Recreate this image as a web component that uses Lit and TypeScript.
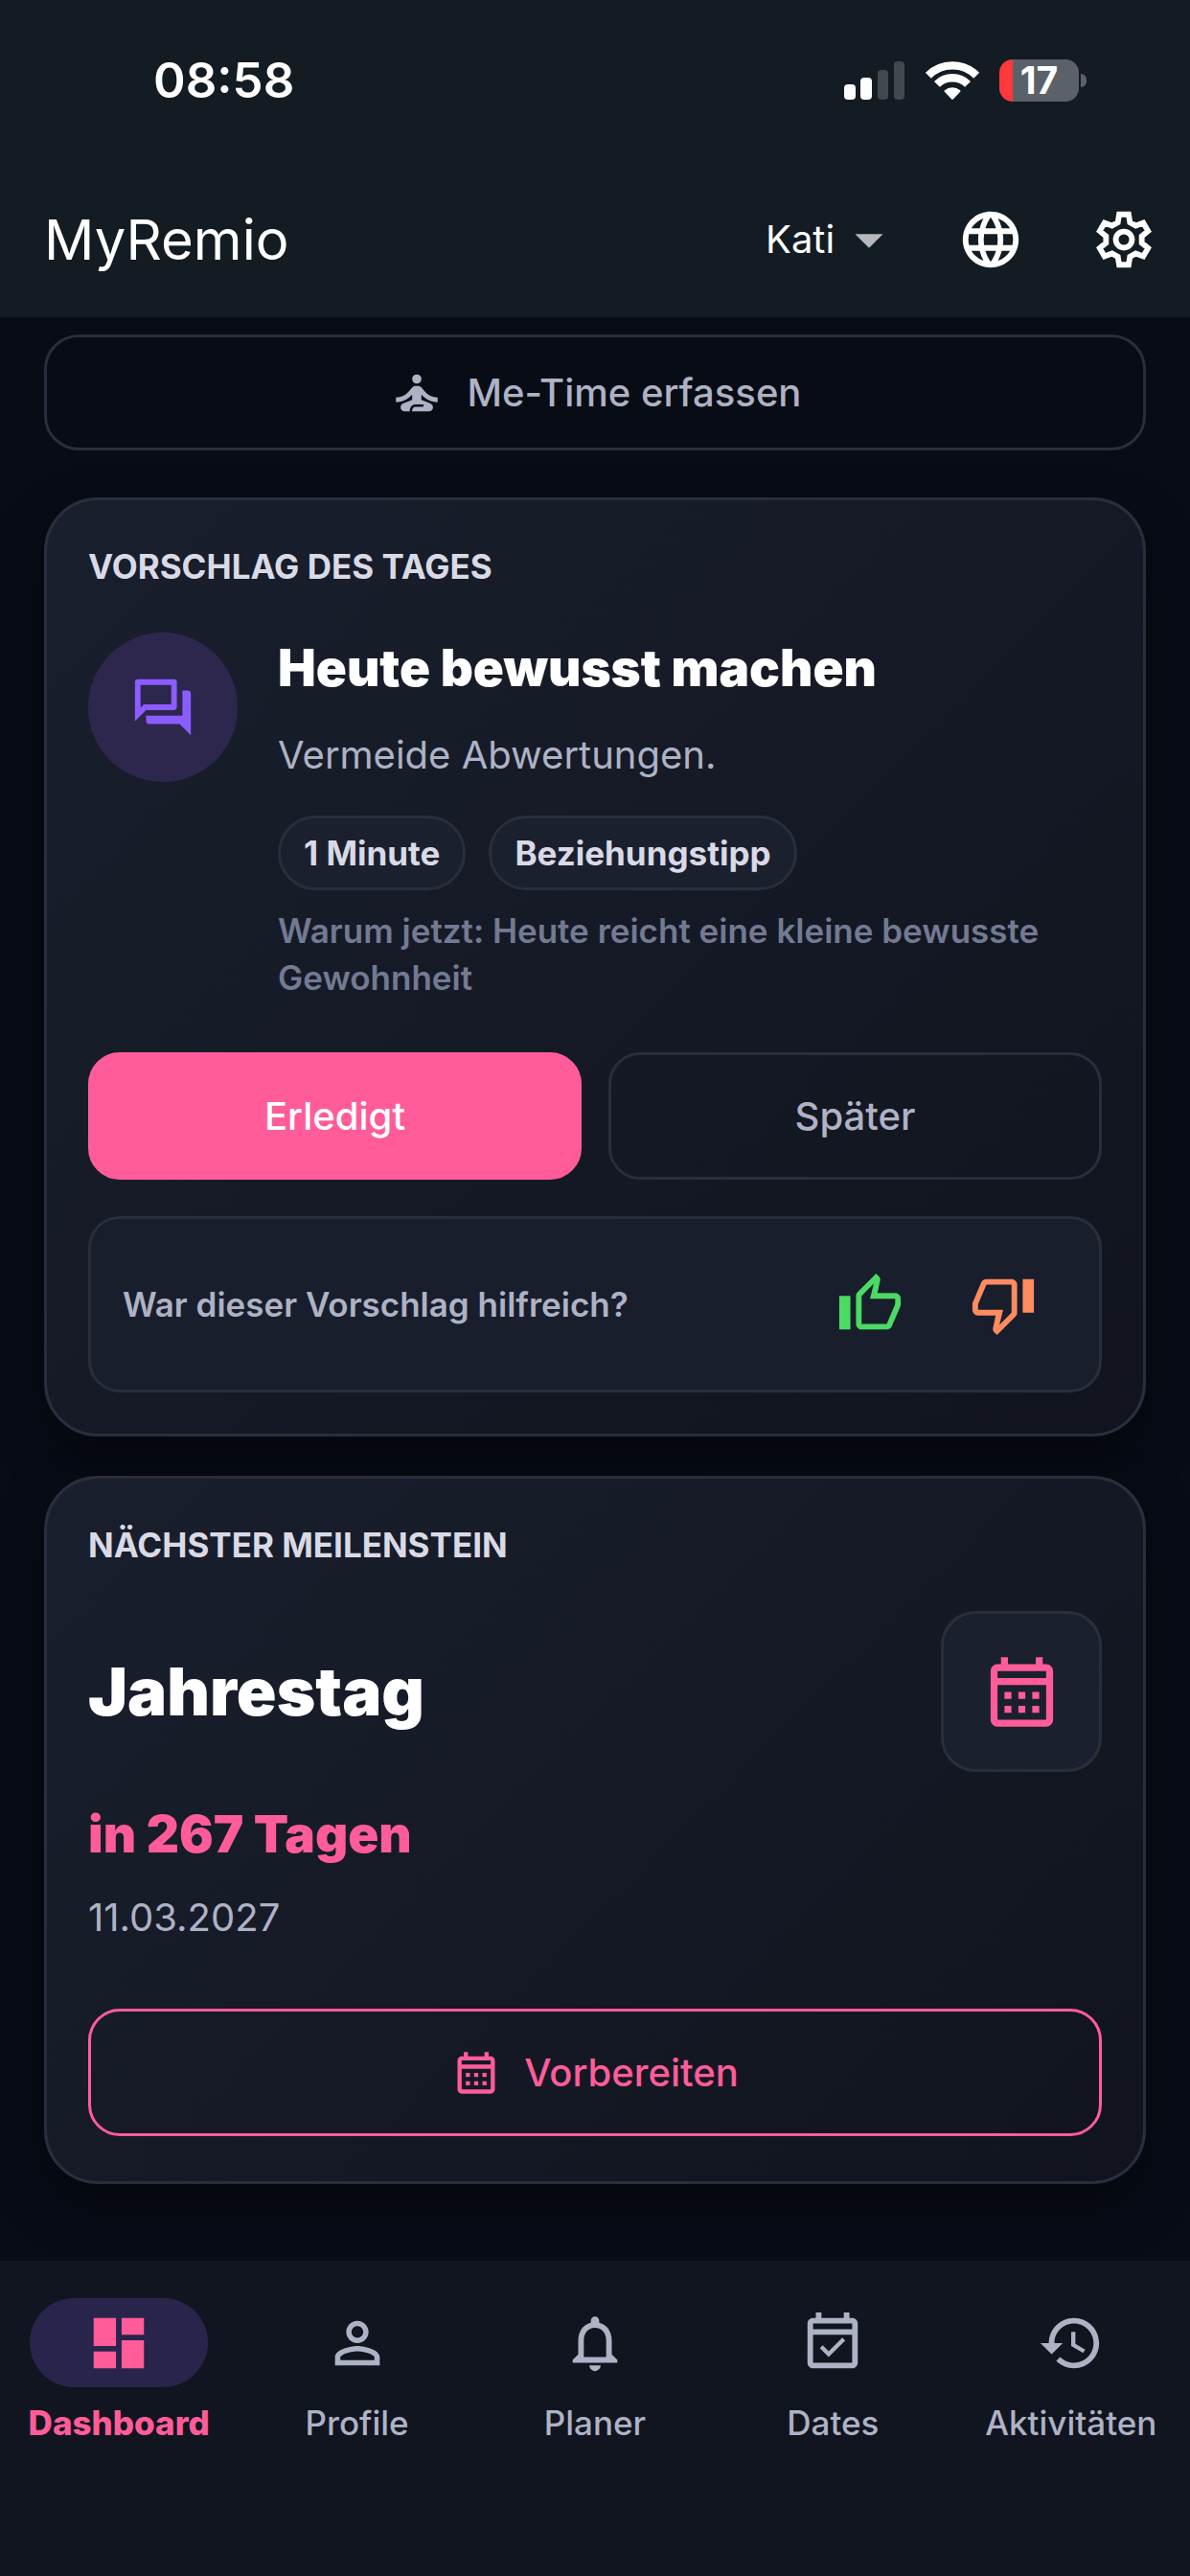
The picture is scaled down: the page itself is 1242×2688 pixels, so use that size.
import { LitElement, html, css, svg } from "lit";
import { customElement, property, state } from "lit/decorators.js";
import { classMap } from "lit/directives/class-map.js";

const ICONS: Record<string, string> = {
  meditate:
    "M10 6a2 2 0 1 0 4 0 2 2 0 1 0-4 0zM21 16v-2c-2.24 0-4.16-.96-5.6-2.68l-1.34-1.6C13.68 9.26 13.12 9 12.53 9h-1.05c-.6 0-1.15.26-1.53.72l-1.34 1.6C7.16 13.04 5.24 14 3 14v2c2.77 0 5.19-1.17 7-3.25V15l-3.88 1.55c-.67.27-1.12.93-1.12 1.66C5 19.2 5.8 20 6.79 20H9v-.5c0-1.38 1.12-2.5 2.5-2.5h3c.28 0 .5.22.5.5s-.22.5-.5.5h-3c-.83 0-1.5.67-1.5 1.5v.5h7.21c.99 0 1.79-.8 1.79-1.79 0-.73-.45-1.39-1.12-1.66L14 15v-2.25c1.81 2.08 4.23 3.25 7 3.25z",
  forum:
    "M15 4v7H5.17L4 12.17V4h11m1-2H3c-.55 0-1 .45-1 1v14l4-4h10c.55 0 1-.45 1-1V3c0-.55-.45-1-1-1zm5 4h-2v9H6v2c0 .55.45 1 1 1h11l4 4V7c0-.55-.45-1-1-1z",
  thumbUp:
    "M9 21h9c.83 0 1.54-.5 1.84-1.22l3.02-7.05c.09-.23.14-.47.14-.73v-2c0-1.1-.9-2-2-2h-6.31l.95-4.57.03-.32c0-.41-.17-.79-.44-1.06L14.17 1 7.58 7.59C7.22 7.95 7 8.45 7 9v10c0 1.1.9 2 2 2zM9 9l4.34-4.34L12 10h9v2l-3 7H9V9zM1 9h4v12H1z",
  thumbDown:
    "M15 3H6c-.83 0-1.54.5-1.84 1.22l-3.02 7.05c-.09.23-.14.47-.14.73v2c0 1.1.9 2 2 2h6.31l-.95 4.57-.03.32c0 .41.17.79.44 1.06L9.83 23l6.59-6.59c.36-.36.58-.86.58-1.41V5c0-1.1-.9-2-2-2zm0 12l-4.34 4.34L12 14H3v-2l3-7h9v10zm4-12h4v12h-4z",
  calendar:
    "M19 4h-1V2h-2v2H8V2H6v2H5c-1.11 0-1.99.9-1.99 2L3 20c0 1.1.89 2 2 2h14c1.1 0 2-.9 2-2V6c0-1.1-.9-2-2-2zm0 16H5V10h14v10zm0-12H5V6h14v2zM9 14H7v-2h2v2zm4 0h-2v-2h2v2zm4 0h-2v-2h2v2zm-8 4H7v-2h2v2zm4 0h-2v-2h2v2zm4 0h-2v-2h2v2z",
  dashboard: "M3 13h8V3H3v10zm0 8h8v-6H3v6zm10 0h8V11h-8v10zm0-18v6h8V3h-8z",
  person:
    "M12 5.9c1.16 0 2.1.94 2.1 2.1s-.94 2.1-2.1 2.1S9.9 9.16 9.9 8s.94-2.1 2.1-2.1m0 9c2.97 0 6.1 1.46 6.1 2.1v1.1H5.9V17c0-.64 3.13-2.1 6.1-2.1M12 4C9.79 4 8 5.79 8 8s1.79 4 4 4 4-1.79 4-4-1.79-4-4-4zm0 9c-2.67 0-8 1.34-8 4v3h16v-3c0-2.66-5.33-4-8-4z",
  bell:
    "M12 22c1.1 0 2-.9 2-2h-4c0 1.1.9 2 2 2zm6-6v-5c0-3.07-1.63-5.64-4.5-6.32V4c0-.83-.67-1.5-1.5-1.5s-1.5.67-1.5 1.5v.68C7.64 5.36 6 7.92 6 11v5l-2 2v1h16v-1l-2-2zm-2 1H8v-6c0-2.48 1.51-4.5 4-4.5s4 2.02 4 4.5v6z",
  eventCheck:
    "M16.53 11.06L15.47 10l-4.88 4.88-2.12-2.12-1.06 1.06L10.59 17l5.94-5.94zM19 3h-1V1h-2v2H8V1H6v2H5c-1.11 0-1.99.9-1.99 2L3 19c0 1.1.89 2 2 2h14c1.1 0 2-.9 2-2V5c0-1.1-.9-2-2-2zm0 16H5V9h14v10zM5 7V5h14v2H5z",
  history:
    "M13 3c-4.97 0-9 4.03-9 9H1l3.89 3.89.07.14L9 12H6c0-3.87 3.13-7 7-7s7 3.13 7 7-3.13 7-7 7c-1.93 0-3.68-.79-4.94-2.06l-1.42 1.42C8.27 19.99 10.51 21 13 21c4.97 0 9-4.03 9-9s-4.03-9-9-9zm-1 5v5l4.28 2.54.72-1.21-3.5-2.08V8H12z",
  globe:
    "M11.99 2C6.47 2 2 6.48 2 12s4.47 10 9.99 10C17.52 22 22 17.52 22 12S17.52 2 11.99 2zm6.93 6h-2.95c-.32-1.25-.78-2.45-1.38-3.56 1.84.63 3.37 1.91 4.33 3.56zM12 4.04c.83 1.2 1.48 2.53 1.91 3.96h-3.82c.43-1.43 1.08-2.76 1.91-3.96zM4.26 14C4.1 13.36 4 12.69 4 12s.1-1.36.26-2h3.38c-.08.66-.14 1.32-.14 2s.06 1.34.14 2H4.26zm.82 2h2.95c.32 1.25.78 2.45 1.38 3.56-1.84-.63-3.37-1.9-4.33-3.56zm2.95-8H5.08c.96-1.66 2.49-2.93 4.33-3.56C8.81 5.55 8.35 6.75 8.03 8zM12 19.96c-.83-1.2-1.48-2.53-1.91-3.96h3.82c-.43 1.43-1.08 2.76-1.91 3.96zM14.34 14H9.66c-.09-.66-.16-1.32-.16-2s.07-1.35.16-2h4.68c.09.65.16 1.32.16 2s-.07 1.34-.16 2zm.25 5.56c.6-1.11 1.06-2.31 1.38-3.56h2.95c-.96 1.65-2.49 2.93-4.33 3.56zM16.36 14c.08-.66.14-1.32.14-2s-.06-1.34-.14-2h3.38c.16.64.26 1.31.26 2s-.1 1.36-.26 2h-3.38z",
  dropDown: "M7 10l5 5 5-5z",
};

/* Outline of a six-toothed gear: one tooth, repeated every 60 degrees. */
const GEAR_POINTS = [0, 1, 2, 3, 4, 5]
  .flatMap((k) => {
    const a = (k * Math.PI) / 3;
    return [
      [-2.16, -6.14],
      [-1.7, -9],
      [1.7, -9],
      [2.16, -6.14],
    ].map(([x, y]) =>
      [12 + x * Math.cos(a) - y * Math.sin(a), 12 + x * Math.sin(a) + y * Math.cos(a)]
        .map((n) => n.toFixed(2))
        .join(",")
    );
  })
  .join(" ");

@customElement("app-icon")
class AppIcon extends LitElement {
  static styles = css`
    :host {
      display: inline-flex;
      flex: none;
      width: 70px;
      height: 70px;
    }
    .glyph {
      width: 100%;
      height: 100%;
      display: block;
      fill: currentColor;
    }
  `;

  @property() name = "";

  render() {
    return html`<svg class="glyph" viewBox="0 0 24 24" aria-hidden="true">
      ${this.name === "gear"
        ? svg`<g fill="none" stroke="currentColor" stroke-width="2">
            <polygon points=${GEAR_POINTS}></polygon>
            <circle cx="12" cy="12" r="2.9"></circle>
          </g>`
        : svg`<path d=${ICONS[this.name] ?? ""}></path>`}
    </svg>`;
  }
}

@customElement("status-bar")
class StatusBar extends LitElement {
  static styles = css`
    :host {
      display: flex;
      justify-content: space-between;
      align-items: center;
      padding: 53px 108px 53px 160px;
      color: #fff;
    }
    .time {
      font-size: 51px;
      line-height: 62px;
      font-weight: 600;
    }
    .indicators {
      display: flex;
      align-items: center;
      gap: 21px;
    }
    .signal {
      width: 64px;
      height: 42px;
    }
    .wifi {
      width: 56px;
      height: 42px;
    }
    .battery {
      display: flex;
      align-items: center;
      gap: 2px;
    }
    .cell {
      display: grid;
      place-items: center;
      width: 83px;
      height: 44px;
      box-sizing: border-box;
      border-radius: 14px;
      background: linear-gradient(90deg, #ff383c 14px, #5b6168 14px);
      font-size: 39px;
      line-height: 44px;
      font-weight: 700;
    }
    .nub {
      width: 6px;
      height: 14px;
      border-radius: 0 7px 7px 0;
      background: #5b6168;
    }
  `;

  render() {
    return html`
      <span class="time">08:58</span>
      <div class="indicators">
        <svg class="signal" viewBox="0 0 64 42" aria-hidden="true">
          <rect x="0" y="25" width="12" height="16" rx="4" fill="#fff"></rect>
          <rect x="17" y="18" width="12" height="23" rx="4" fill="#fff"></rect>
          <rect x="35" y="10" width="11" height="31" rx="4" fill="#41494f"></rect>
          <rect x="52" y="1" width="11" height="40" rx="4" fill="#41494f"></rect>
        </svg>
        <svg class="wifi" viewBox="0 0 56 42" aria-hidden="true">
          <g fill="none" stroke="#fff" stroke-width="8.4">
            <path d="M2.8 15.8A35.6 35.6 0 0 1 53.2 15.8"></path>
            <path d="M11.9 24.9A22.8 22.8 0 0 1 44.1 24.9"></path>
          </g>
          <path
            d="M19.6 32.6Q19 31.8 19.9 31.2A13 13 0 0 1 36.1 31.2Q37 31.8 36.4 32.6L28.8 40.4Q28 41.2 27.2 40.4Z"
            fill="#fff"
          ></path>
        </svg>
        <div class="battery">
          <span class="cell">17</span>
          <span class="nub"></span>
        </div>
      </div>
    `;
  }
}

interface NavItem {
  icon: string;
  label: string;
}

const NAV_ITEMS: NavItem[] = [
  { icon: "dashboard", label: "Dashboard" },
  { icon: "person", label: "Profile" },
  { icon: "bell", label: "Planer" },
  { icon: "eventCheck", label: "Dates" },
  { icon: "history", label: "Aktivitäten" },
];

@customElement("bottom-nav")
class BottomNav extends LitElement {
  static styles = css`
    :host {
      display: block;
      background: #11151f;
    }
    .bar {
      display: grid;
      grid-template-columns: repeat(5, minmax(0, 1fr));
      padding: 39px 0 139px;
    }
    .item {
      display: flex;
      flex-direction: column;
      align-items: center;
      gap: 16px;
      color: #aeb2c5;
      text-decoration: none;
      font-size: 35px;
      line-height: 42px;
      font-weight: 500;
      white-space: nowrap;
    }
    .pill {
      display: grid;
      place-items: center;
      width: 186px;
      height: 93px;
      border-radius: 47px;
    }
    .item.active {
      color: #ff5c99;
      font-weight: 800;
    }
    .item.active .pill {
      background: #29244b;
    }
  `;

  @state() private active = "Dashboard";

  render() {
    return html`<nav class="bar">
      ${NAV_ITEMS.map(
        (item) => html`<a
          class=${classMap({ item: true, active: item.label === this.active })}
          href="#${item.label.toLowerCase()}"
          @click=${() => (this.active = item.label)}
        >
          <span class="pill"><app-icon name=${item.icon}></app-icon></span>
          <span>${item.label}</span>
        </a>`
      )}
    </nav>`;
  }
}

@customElement("app-root")
class AppRoot extends LitElement {
  static styles = css`
    :host {
      display: flex;
      flex-direction: column;
      min-height: 100vh;
      background: #080c15;
      color: #fff;
      font-family: Inter, "Liberation Sans", sans-serif;
      font-optical-sizing: none;
    }
    .header {
      background: #131c23;
    }
    .appbar {
      display: flex;
      align-items: center;
      height: 163px;
      padding-left: 46px;
    }
    .brand {
      flex: 1;
      margin: 0;
      font-size: 58px;
      line-height: 74px;
      font-weight: 400;
    }
    .profile {
      position: relative;
      display: flex;
      align-items: center;
      margin-right: 22px;
    }
    .profile-select {
      appearance: none;
      border: 0;
      margin: 0;
      padding: 0 70px 0 0;
      background: transparent;
      color: #fff;
      font: inherit;
      font-size: 40px;
      line-height: 56px;
    }
    .profile-arrow {
      position: absolute;
      right: 0;
      color: #b6b9bc;
      pointer-events: none;
    }
    .icon-button {
      display: grid;
      place-items: center;
      width: 139px;
      height: 139px;
      padding: 0;
      border: 0;
      background: transparent;
      color: #fff;
    }
    .content {
      flex: 1;
      display: flex;
      flex-direction: column;
      padding: 18px 46px 80px;
    }
    .button {
      display: flex;
      align-items: center;
      justify-content: center;
      gap: 24px;
      height: 133px;
      padding: 0;
      box-sizing: border-box;
      border: 3px solid #2a2d3c;
      border-radius: 33px;
      background: transparent;
      color: #aeb2c5;
      font: inherit;
      font-size: 40px;
      line-height: 56px;
      font-weight: 500;
    }
    .button.primary {
      border-color: #ff5c99;
      background: #ff5c99;
      color: #fff;
    }
    .button.accent {
      margin-top: 67px;
      border-color: #ff5c99;
      color: #ff5c99;
    }
    .button.accent app-icon {
      width: 52px;
      height: 52px;
    }
    .button.metime {
      height: 121px;
      margin-bottom: 49px;
      border-radius: 36px;
    }
    .button.metime app-icon {
      width: 58px;
      height: 58px;
    }
    .cards {
      display: flex;
      flex-direction: column;
      gap: 41px;
    }
    .card {
      display: flex;
      flex-direction: column;
      padding: 48px 43px 43px;
      border: 3px solid #2a2e3c;
      border-radius: 56px;
      background: linear-gradient(135deg, #191f2d, #11141e) padding-box, #2a2e3c border-box;
      box-shadow: 0 24px 56px rgba(0, 0, 0, 0.4);
    }
    .card-title {
      margin: 0 0 48px;
      color: #d9dae6;
      font-size: 35px;
      line-height: 42px;
      font-weight: 700;
    }
    .tip {
      display: flex;
      align-items: flex-start;
      gap: 42px;
    }
    .tip-icon {
      display: grid;
      place-items: center;
      flex: none;
      width: 156px;
      height: 156px;
      border-radius: 50%;
      background: #2d274e;
      color: #8b5cff;
    }
    .tip-body {
      flex: 1;
      min-width: 0;
    }
    .headline {
      margin: 0;
      font-size: 53px;
      line-height: 74px;
      font-weight: 900;
    }
    .text {
      margin: 0;
      color: #aeb2c5;
      font-size: 40px;
      line-height: 56px;
      font-weight: 400;
    }
    .tip-body .text {
      margin: 26px 0 35px;
    }
    .chips {
      display: flex;
      flex-wrap: wrap;
      gap: 24px;
    }
    .chip {
      padding: 15px 24px;
      border: 3px solid #2a2e3c;
      border-radius: 39px;
      background: #1b202e;
      color: #d9dae6;
      font-size: 35px;
      line-height: 42px;
      font-weight: 700;
    }
    .reason {
      margin: 18px 0 0;
      color: #737a92;
      font-size: 35px;
      line-height: 49px;
      font-weight: 600;
    }
    .actions {
      display: grid;
      grid-template-columns: 1fr 1fr;
      gap: 28px;
      margin: 53px 0 38px;
    }
    .feedback {
      display: flex;
      align-items: center;
      padding: 20px 31px 20px 33px;
      border: 3px solid #2a2e3c;
      border-radius: 33px;
      background: #191e2c;
    }
    .feedback-text {
      flex: 1;
      color: #aeb2c5;
      font-size: 35px;
      line-height: 42px;
      font-weight: 600;
    }
    .feedback .icon-button {
      height: 138px;
    }
    .feedback .up {
      color: #4cd964;
    }
    .feedback .down {
      color: #ff8c61;
    }
    .milestone {
      display: flex;
      align-items: center;
      justify-content: space-between;
      margin-bottom: 28px;
    }
    .milestone-name {
      margin: 0;
      font-size: 69px;
      line-height: 78px;
      font-weight: 900;
    }
    .milestone-icon {
      display: grid;
      place-items: center;
      width: 168px;
      height: 168px;
      box-sizing: border-box;
      border: 3px solid #2a2e3c;
      border-radius: 36px;
      background: #1b202e;
      color: #ff5c99;
    }
    .milestone-icon app-icon {
      width: 87px;
      height: 87px;
    }
    .countdown {
      margin: 0 0 22px;
      color: #ff5c99;
    }
    .milestone-card {
      padding-bottom: 47px;
    }
  `;

  render() {
    return html`
      <header class="header">
        <status-bar></status-bar>
        <div class="appbar">
          <h1 class="brand">MyRemio</h1>
          <label class="profile">
            <select class="profile-select" aria-label="Profil">
              <option>Kati</option>
            </select>
            <app-icon class="profile-arrow" name="dropDown"></app-icon>
          </label>
          <button class="icon-button" aria-label="Sprache"><app-icon name="globe"></app-icon></button>
          <button class="icon-button" aria-label="Einstellungen"><app-icon name="gear"></app-icon></button>
        </div>
      </header>

      <main class="content">
        <button class="button metime"><app-icon name="meditate"></app-icon>Me-Time erfassen</button>

        <div class="cards">
          <section class="card">
            <h2 class="card-title">VORSCHLAG DES TAGES</h2>
            <div class="tip">
              <div class="tip-icon"><app-icon name="forum"></app-icon></div>
              <div class="tip-body">
                <h3 class="headline">Heute bewusst machen</h3>
                <p class="text">Vermeide Abwertungen.</p>
                <div class="chips">
                  <span class="chip">1 Minute</span>
                  <span class="chip">Beziehungstipp</span>
                </div>
                <p class="reason">Warum jetzt: Heute reicht eine kleine bewusste Gewohnheit</p>
              </div>
            </div>
            <div class="actions">
              <button class="button primary">Erledigt</button>
              <button class="button">Später</button>
            </div>
            <div class="feedback">
              <span class="feedback-text">War dieser Vorschlag hilfreich?</span>
              <button class="icon-button up" aria-label="Hilfreich"><app-icon name="thumbUp"></app-icon></button>
              <button class="icon-button down" aria-label="Nicht hilfreich"><app-icon name="thumbDown"></app-icon></button>
            </div>
          </section>

          <section class="card milestone-card">
            <h2 class="card-title">NÄCHSTER MEILENSTEIN</h2>
            <div class="milestone">
              <h3 class="milestone-name">Jahrestag</h3>
              <div class="milestone-icon"><app-icon name="calendar"></app-icon></div>
            </div>
            <p class="headline countdown">in 267 Tagen</p>
            <p class="text">11.03.2027</p>
            <button class="button accent"><app-icon name="calendar"></app-icon>Vorbereiten</button>
          </section>
        </div>
      </main>

      <bottom-nav></bottom-nav>
    `;
  }
}
